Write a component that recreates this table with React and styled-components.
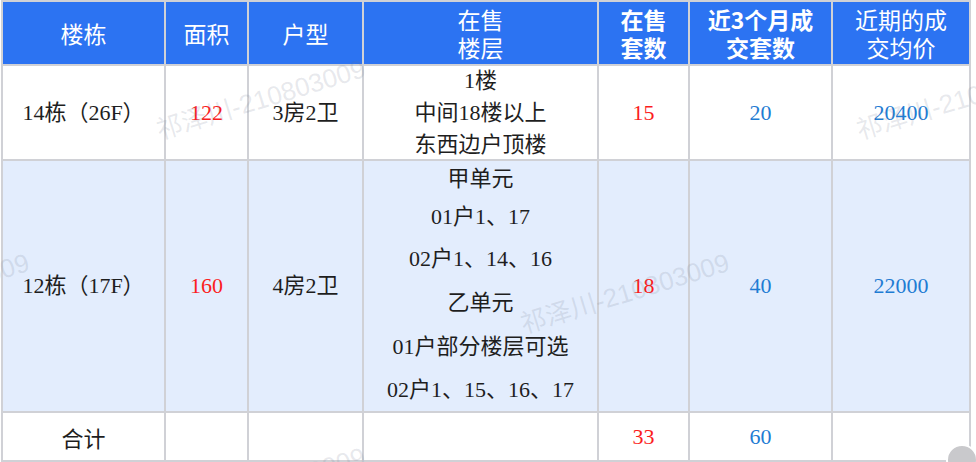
import React from 'react'
import styled, { createGlobalStyle } from 'styled-components'

const GlobalStyle = createGlobalStyle`
  html, body { margin: 0; padding: 0; background: #ffffff; }
  body { width: 976px; height: 462px; overflow: hidden; }
`

const COLS = '161px 81px 113px 233px 89px 141px 136px'

const headers = [
  { lines: ['楼栋'] },
  { lines: ['面积'] },
  { lines: ['户型'] },
  { lines: ['在售', '楼层'] },
  { lines: ['在售', '套数'], bold: true },
  { lines: ['近3个月成', '交套数'], bold: true },
  { lines: ['近期的成', '交均价'] },
]

const rows = [
  {
    tint: false,
    cells: [
      { text: '14栋（26F）' },
      { text: '122', tone: 'red' },
      { text: '3房2卫' },
      { lines: [['1楼', 32], ['中间18楼以上', 32], ['东西边户顶楼', 32]] },
      { text: '15', tone: 'red' },
      { text: '20', tone: 'blue' },
      { text: '20400', tone: 'blue' },
    ],
  },
  {
    tint: true,
    cells: [
      { text: '12栋（17F）' },
      { text: '160', tone: 'red' },
      { text: '4房2卫' },
      {
        lines: [
          ['甲单元', 36],
          ['01户1、17', 40],
          ['02户1、14、16', 44],
          ['乙单元', 44],
          ['01户部分楼层可选', 44],
          ['02户1、15、16、17', 42],
        ],
      },
      { text: '18', tone: 'red' },
      { text: '40', tone: 'blue' },
      { text: '22000', tone: 'blue' },
    ],
  },
  {
    tint: false,
    cells: [
      { text: '合计', sans: true },
      { text: '' },
      { text: '' },
      { text: '' },
      { text: '33', tone: 'red' },
      { text: '60', tone: 'blue' },
      { text: '' },
    ],
  },
]

const marks = [
  { x: 260, y: 97 },
  { x: 960, y: 97 },
  { x: 624, y: 291 },
  { x: -76, y: 291 },
  { x: 260, y: 485 },
]

const App = () => {
  return (
    <>
      <GlobalStyle />
      <Page>
        <Table>
          {headers.map((h, i) => (
            <HeadCell key={'h' + i} $bold={h.bold}>
              {h.lines.map((l) => (
                <Line key={l} $h={28}>{l}</Line>
              ))}
            </HeadCell>
          ))}
          {rows.map((r, ri) =>
            r.cells.map((c, ci) => (
              <Cell key={ri + '-' + ci} $tint={r.tint} $tone={c.tone} $sans={c.sans}>
                {c.lines
                  ? c.lines.map(([l, h]) => (
                      <Line key={l} $h={h}>
                        {l}
                      </Line>
                    ))
                  : c.text}
              </Cell>
            ))
          )}
        </Table>
        <Watermarks>
          {marks.map((m, i) => (
            <Mark key={i} style={{ left: m.x, top: m.y }}>
              祁泽川-210803009
            </Mark>
          ))}
        </Watermarks>
        <Corner />
      </Page>
    </>
  )
}

export default App

const Page = styled.div`
  position: relative;
  width: 976px;
  height: 462px;
  overflow: hidden;
`

const Table = styled.div`
  display: grid;
  grid-template-columns: ${COLS};
  grid-template-rows: 62px 93px 250px 47px;
  gap: 2px;
  padding: 2px;
  margin-left: 1px;
  width: fit-content;
  background: #d0d1d6;
`

const HeadCell = styled.div`
  background: #2c73f2;
  color: #ffffff;
  display: flex;
  flex-direction: column;
  align-items: center;
  justify-content: center;
  font-family: 'Noto Sans CJK SC', 'Liberation Sans', sans-serif;
  font-size: 23px;
  font-weight: ${(p) => (p.$bold ? 700 : 400)};
  text-align: center;
`

const Line = styled.div`
  white-space: nowrap;
  height: ${(p) => p.$h}px;
  line-height: ${(p) => p.$h}px;
`

const Cell = styled.div`
  background: ${(p) => (p.$tint ? '#e3edfd' : '#ffffff')};
  color: ${(p) => (p.$tone === 'red' ? '#fb1d1d' : p.$tone === 'blue' ? '#1f7cd3' : '#1e1e1e')};
  display: flex;
  flex-direction: column;
  align-items: center;
  justify-content: center;
  font-family: ${(p) =>
    p.$sans
      ? "'Noto Sans CJK SC', 'Liberation Sans', sans-serif"
      : "'Liberation Serif', 'Noto Sans CJK SC', serif"};
  font-size: 22px;
  line-height: 32px;
  text-align: center;
`

const Watermarks = styled.div`
  position: absolute;
  inset: 0;
  pointer-events: none;
`

const Mark = styled.span`
  position: absolute;
  transform: translate(-50%, -50%) rotate(-17deg);
  font-family: 'Liberation Sans', 'Noto Sans CJK SC', sans-serif;
  font-size: 26px;
  white-space: nowrap;
  color: rgba(110, 120, 140, 0.17);
`

const Corner = styled.div`
  position: absolute;
  right: -2px;
  bottom: -14px;
  width: 28px;
  height: 28px;
  border-radius: 50%;
  background: #c9c9cc;
  border: 2px solid #ffffff;
`
